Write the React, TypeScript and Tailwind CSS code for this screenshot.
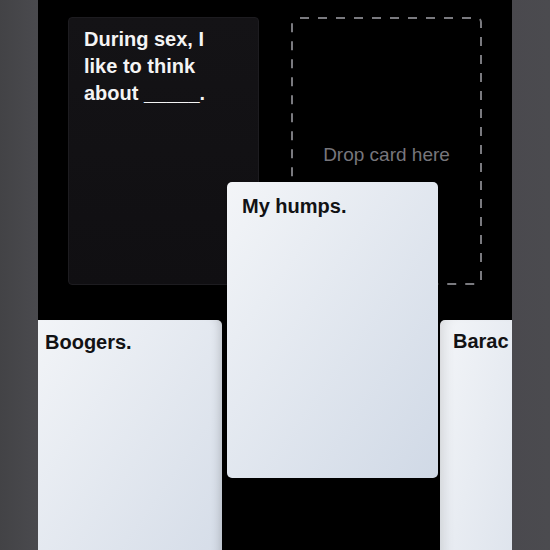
import React from "react";

const font = { fontFamily: '"Liberation Sans", Arial, Helvetica, sans-serif' };

function DropZone() {
  return (
    <div className="relative w-[191px] h-[268px] flex items-center justify-center pt-[8px]">
      <svg className="absolute inset-0" width="191" height="268" viewBox="0 0 191 268">
        <rect
          x="1"
          y="1"
          width="189"
          height="266"
          rx="4"
          ry="4"
          fill="none"
          stroke="#7a7a7f"
          strokeWidth="2"
          strokeDasharray="9 9"
          strokeDashoffset="-4"
        />
      </svg>
      <span className="relative text-[19px] text-[#77767c]">Drop card here</span>
    </div>
  );
}

export default function App() {
  return (
    <div className="w-[550px] h-[550px] flex overflow-hidden bg-black" style={font}>
      <div className="w-[38px] h-full shrink-0 bg-gradient-to-r from-[#434346] to-[#4a4a4e] relative z-10" />
      <div className="relative flex-1 h-full bg-black overflow-hidden">
        <div className="flex gap-[32px] px-[30px] pt-[17px]">
          <div className="w-[191px] h-[268px] rounded-[4px] border border-[#1d1c20] bg-gradient-to-b from-[#141316] to-[#100f12] pl-[15px] pt-[8px]">
            <p className="text-[20px] leading-[27px] font-bold text-[#f4f4f4]">
              <span className="block">During sex, I</span>
              <span className="block">like to think</span>
              <span className="block">about _____.</span>
            </p>
          </div>
          <DropZone />
        </div>
        <div className="flex gap-[218px] mt-[35px] ml-[-9px]">
          <div className="w-[193px] h-[272px] shrink-0 rounded-[5px] bg-gradient-to-br from-[#f3f5f8] to-[#d3dbe7] shadow-[inset_-10px_0_10px_-8px_rgba(0,0,0,0.18)] pl-[16px] pt-[9px]">
            <p className="text-[20px] leading-[27px] font-bold text-[#121214]">Boogers.</p>
          </div>
          <div className="w-[72px] h-[272px] shrink-0 rounded-l-[5px] bg-gradient-to-br from-[#f3f5f8] to-[#dde3ec] shadow-[inset_12px_0_14px_-10px_rgba(0,0,0,0.14)] pl-[13px] pt-[8px]">
            <p className="text-[20px] leading-[27px] font-bold text-[#121214] whitespace-nowrap">Barac</p>
          </div>
        </div>
        <div className="absolute left-[189px] top-[182px] w-[211px] h-[296px] rounded-[5px] bg-gradient-to-br from-[#f3f5f8] to-[#d0d9e6] shadow-[0_1px_3px_rgba(0,0,0,0.3)] pl-[15px] pt-[11px]">
          <p className="text-[20px] leading-[27px] font-bold text-[#121214]">My humps.</p>
        </div>
      </div>
      <div className="w-[38px] h-full shrink-0 bg-gradient-to-r from-[#4a494e] to-[#4b4b4f] relative z-10" />
    </div>
  );
}
